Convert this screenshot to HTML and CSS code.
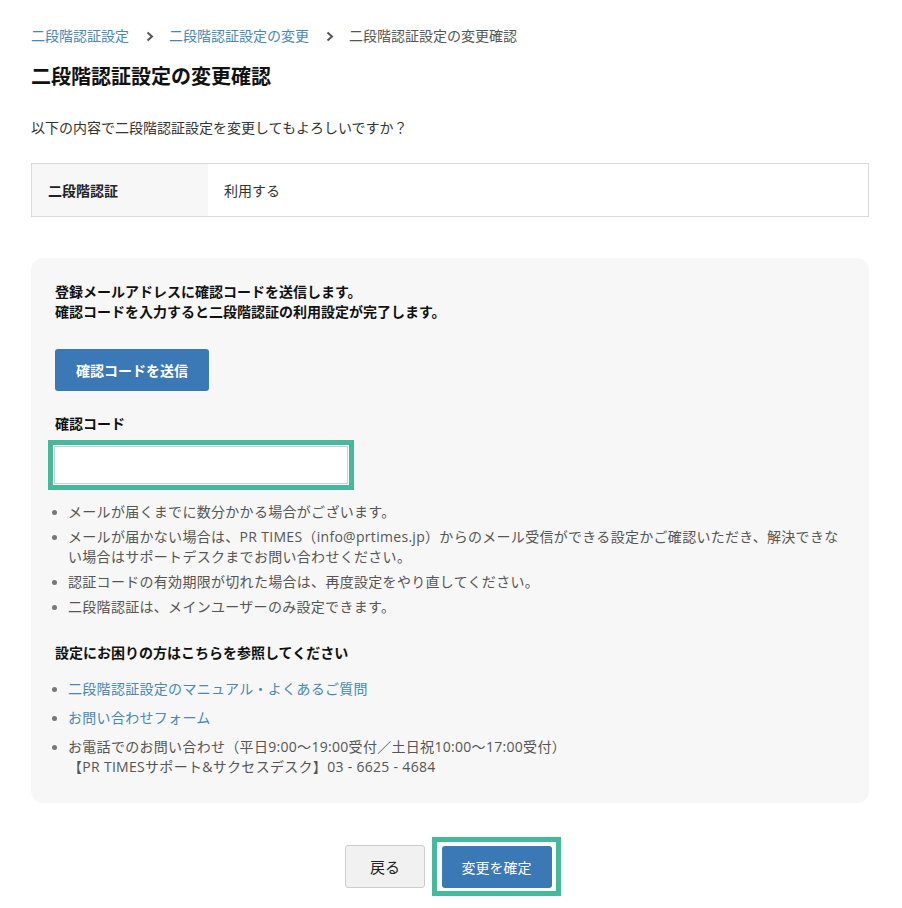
FILE: index.html
```html
<!DOCTYPE html>
<html lang="ja">
<head>
<meta charset="utf-8">
<title>二段階認証設定の変更確認</title>
<link rel="stylesheet" href="styles.css">
</head>
<body>
<div class="page">
  <nav class="crumbs">
    <a href="#">二段階認証設定</a>
    <span class="sep"><svg width="8" height="11" viewBox="0 0 8 11"><path d="M1.5 1.5 L6 5.5 L1.5 9.5" fill="none" stroke="#555" stroke-width="2"/></svg></span>
    <a href="#">二段階認証設定の変更</a>
    <span class="sep"><svg width="8" height="11" viewBox="0 0 8 11"><path d="M1.5 1.5 L6 5.5 L1.5 9.5" fill="none" stroke="#555" stroke-width="2"/></svg></span>
    <span class="current">二段階認証設定の変更確認</span>
  </nav>

  <h1 class="title">二段階認証設定の変更確認</h1>
  <p class="lead">以下の内容で二段階認証設定を変更してもよろしいですか？</p>

  <table class="confirm">
    <tr>
      <th>二段階認証</th>
      <td>利用する</td>
    </tr>
  </table>

  <section class="panel">
    <p class="intro">登録メールアドレスに確認コードを送信します。<br>確認コードを入力すると二段階認証の利用設定が完了します。</p>
    <button class="btn-send" type="button">確認コードを送信</button>
    <p class="field-label">確認コード</p>
    <div class="highlight input-frame"><input class="code-input" type="text"></div>
    <ul class="notes">
      <li>メールが届くまでに数分かかる場合がございます。</li>
      <li>メールが届かない場合は、PR TIMES（info@prtimes.jp）からのメール受信ができる設定かご確認いただき、解決できない場合はサポートデスクまでお問い合わせください。</li>
      <li>認証コードの有効期限が切れた場合は、再度設定をやり直してください。</li>
      <li>二段階認証は、メインユーザーのみ設定できます。</li>
    </ul>
    <p class="help-title">設定にお困りの方はこちらを参照してください</p>
    <ul class="help">
      <li><a href="#">二段階認証設定のマニュアル・よくあるご質問</a></li>
      <li><a href="#">お問い合わせフォーム</a></li>
      <li>お電話でのお問い合わせ（平日9:00～19:00受付／土日祝10:00～17:00受付）<br>【PR TIMESサポート&amp;サクセスデスク】03 - 6625 - 4684</li>
    </ul>
  </section>

  <div class="actions">
    <button class="btn-back" type="button">戻る</button>
    <div class="highlight submit-frame"><button class="btn-submit" type="button">変更を確定</button></div>
  </div>
</div>
</body>
</html>
```

FILE: styles.css
```css
html, body {
  margin: 0;
  padding: 0;
  background: #fff;
}
body {
  font-family: "Open Sans", "Noto Sans CJK JP", sans-serif;
  font-size: 14px;
  color: #333;
}
.page {
  width: 838px;
  margin-left: 31px;
  padding-top: 26px;
  padding-bottom: 10px;
}
.crumbs {
  display: flex;
  align-items: center;
  height: 20px;
  line-height: 20px;
  font-size: 14px;
}
.crumbs a {
  color: #4a87b3;
  text-decoration: none;
}
.crumbs .sep {
  display: flex;
  align-items: center;
  margin: 0 15px 0 17px;
}
.crumbs .current {
  color: #555;
}
.title {
  margin: 17px 0 0;
  font-size: 20px;
  line-height: 28px;
  font-weight: 700;
  color: #111;
}
.lead {
  margin: 27px 0 0;
  line-height: 20px;
  font-size: 14px;
  color: #333;
}
.confirm {
  margin-top: 25px;
  width: 100%;
  border-collapse: collapse;
  border: 1px solid #d9d9d9;
}
.confirm th {
  width: 144px;
  padding: 0 16px;
  height: 52px;
  text-align: left;
  font-weight: 700;
  background: #f7f7f7;
  color: #222;
}
.confirm td {
  padding: 0 16px;
  color: #333;
}
.panel {
  margin-top: 41px;
  background: #f7f7f7;
  border-radius: 12px;
  padding: 24px 24px 26px;
}
.intro {
  margin: 0;
  font-weight: 700;
  line-height: 20px;
  color: #111;
}
.btn-send {
  display: block;
  margin-top: 27px;
  width: 154px;
  height: 42px;
  border: none;
  border-radius: 3px;
  background: #3b78b6;
  color: #fff;
  font-family: inherit;
  font-size: 14px;
  font-weight: 700;
}
.field-label {
  margin: 23px 0 0;
  font-weight: 700;
  line-height: 20px;
  color: #111;
}
.highlight {
  border: 5px solid #45b99b;
  background: #fff;
  box-sizing: border-box;
}
.input-frame {
  margin: 6px 0 0 -7px;
  width: 306px;
  height: 50px;
  padding: 1px;
}
.code-input {
  display: block;
  width: 100%;
  height: 100%;
  box-sizing: border-box;
  border: 1px solid #c9d2d2;
  background: #fff;
  margin: 0;
}
.notes, .help {
  list-style: none;
  margin: 12px 0 0;
  padding: 0;
  color: #555;
}
.notes li, .help li {
  position: relative;
  padding-left: 13px;
  line-height: 20px;
  letter-spacing: 0.3px;
}
.notes li + li {
  margin-top: 5px;
}
.notes li::before, .help li::before {
  content: "";
  position: absolute;
  left: -3px;
  top: 8px;
  width: 5px;
  height: 5px;
  border-radius: 50%;
  background: #777;
}
.help-title {
  margin: 26px 0 0;
  font-weight: 700;
  line-height: 20px;
  color: #111;
}
.help {
  margin-top: 16px;
}
.help li + li {
  margin-top: 9px;
}
.help a {
  color: #4a87b3;
  text-decoration: none;
}
.actions {
  display: flex;
  justify-content: center;
  align-items: center;
  gap: 7px;
  margin-top: 34px;
  padding-left: 6px;
}
.btn-back {
  width: 80px;
  height: 43px;
  border: 1px solid #ccc;
  border-radius: 3px;
  background: #f1f1f1;
  color: #222;
  font-family: inherit;
  font-size: 15px;
}
.submit-frame {
  width: 129px;
  height: 59px;
  padding: 2px 4px;
  display: flex;
  align-items: center;
  justify-content: center;
}
.btn-submit {
  width: 110px;
  height: 42px;
  border: none;
  border-radius: 3px;
  background: #3b78b6;
  color: #fff;
  font-family: inherit;
  font-size: 14px;
}
```
